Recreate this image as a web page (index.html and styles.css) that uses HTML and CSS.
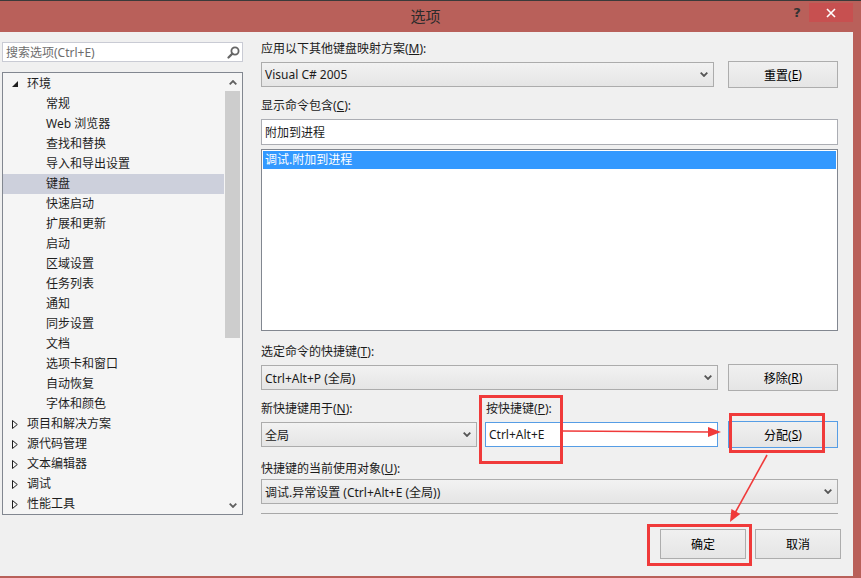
FILE: index.html
```html
<!DOCTYPE html>
<html lang="zh-CN">
<head>
<meta charset="utf-8">
<title>选项</title>
<link rel="stylesheet" href="styles.css">
</head>
<body>
<div class="window">
  <div class="titlebar">
    <span class="title">选项</span>
    <span class="help">?</span>
    <span class="close">
      <svg width="10" height="10" viewBox="0 0 10 10"><path d="M1 1 L9 9 M9 1 L1 9" stroke="#fff" stroke-width="1.6" fill="none"/></svg>
    </span>
  </div>
  <div class="client">
    <div class="left">
      <div class="search">
        <span>搜索选项(Ctrl+E)</span>
        <svg class="search-icon" width="13" height="13" viewBox="0 0 13 13"><circle cx="8" cy="5" r="3.6" stroke="#666" stroke-width="1.8" fill="none"/><path d="M5.4 7.6 L1.5 11.5" stroke="#666" stroke-width="2.2" stroke-linecap="round"/></svg>
      </div>
      <div class="tree">
        <div class="items">
          <div class="row l0"><span class="tw"><svg width="6" height="6" viewBox="0 0 6 6"><polygon points="6,0 6,6 0,6" fill="#1e1e1e"/></svg></span>环境</div>
          <div class="row l1">常规</div>
          <div class="row l1">Web 浏览器</div>
          <div class="row l1">查找和替换</div>
          <div class="row l1">导入和导出设置</div>
          <div class="row l1 sel">键盘</div>
          <div class="row l1">快速启动</div>
          <div class="row l1">扩展和更新</div>
          <div class="row l1">启动</div>
          <div class="row l1">区域设置</div>
          <div class="row l1">任务列表</div>
          <div class="row l1">通知</div>
          <div class="row l1">同步设置</div>
          <div class="row l1">文档</div>
          <div class="row l1">选项卡和窗口</div>
          <div class="row l1">自动恢复</div>
          <div class="row l1">字体和颜色</div>
          <div class="row l0"><span class="tw"><svg width="6" height="9" viewBox="0 0 6 9"><polygon points="0.5,0.5 5.3,4.5 0.5,8.5" fill="none" stroke="#1e1e1e" stroke-width="1"/></svg></span>项目和解决方案</div>
          <div class="row l0"><span class="tw"><svg width="6" height="9" viewBox="0 0 6 9"><polygon points="0.5,0.5 5.3,4.5 0.5,8.5" fill="none" stroke="#1e1e1e" stroke-width="1"/></svg></span>源代码管理</div>
          <div class="row l0"><span class="tw"><svg width="6" height="9" viewBox="0 0 6 9"><polygon points="0.5,0.5 5.3,4.5 0.5,8.5" fill="none" stroke="#1e1e1e" stroke-width="1"/></svg></span>文本编辑器</div>
          <div class="row l0"><span class="tw"><svg width="6" height="9" viewBox="0 0 6 9"><polygon points="0.5,0.5 5.3,4.5 0.5,8.5" fill="none" stroke="#1e1e1e" stroke-width="1"/></svg></span>调试</div>
          <div class="row l0"><span class="tw"><svg width="6" height="9" viewBox="0 0 6 9"><polygon points="0.5,0.5 5.3,4.5 0.5,8.5" fill="none" stroke="#1e1e1e" stroke-width="1"/></svg></span>性能工具</div>
        </div>
        <div class="scroll">
          <div class="sb-btn"><svg width="8" height="5" viewBox="0 0 8 5"><polyline points="0.7,4.3 4,1 7.3,4.3" fill="none" stroke="#606060" stroke-width="1.8"/></svg></div>
          <div class="thumb"></div>
          <div class="track"></div>
          <div class="sb-btn"><svg width="8" height="5" viewBox="0 0 8 5"><polyline points="0.7,0.7 4,4 7.3,0.7" fill="none" stroke="#606060" stroke-width="1.8"/></svg></div>
        </div>
      </div>
    </div>

    <div class="right">
      <div class="label">应用以下其他键盘映射方案(<u>M</u>):</div>
      <div class="ctl-row gap14 mt4">
        <div class="combo w453"><span>Visual C# 2005</span><svg width="8" height="5" viewBox="0 0 8 5"><polyline points="0.7,0.7 4,4 7.3,0.7" fill="none" stroke="#555" stroke-width="1.8"/></svg></div>
        <div class="btn">重置(<u>E</u>)</div>
      </div>

      <div class="label mt10">显示命令包含(<u>C</u>):</div>
      <div class="input mt5">附加到进程</div>
      <div class="list mt4">
        <div class="list-sel">调试.附加到进程</div>
      </div>

      <div class="label mt13">选定命令的快捷键(<u>T</u>):</div>
      <div class="ctl-row gap10 mt4">
        <div class="combo w457"><span>Ctrl+Alt+P (全局)</span><svg width="8" height="5" viewBox="0 0 8 5"><polyline points="0.7,0.7 4,4 7.3,0.7" fill="none" stroke="#555" stroke-width="1.8"/></svg></div>
        <div class="btn">移除(<u>R</u>)</div>
      </div>

      <div class="label-row mt10">
        <div class="label w225">新快捷键用于(<u>N</u>):</div>
        <div class="label">按快捷键(<u>P</u>):</div>
      </div>
      <div class="ctl-row mt4">
        <div class="combo w216"><span>全局</span><svg width="8" height="5" viewBox="0 0 8 5"><polyline points="0.7,0.7 4,4 7.3,0.7" fill="none" stroke="#555" stroke-width="1.8"/></svg></div>
        <div class="input focus w233">Ctrl+Alt+E</div>
        <div class="btn default">分配(<u>S</u>)</div>
      </div>

      <div class="label mt13">快捷键的当前使用对象(<u>U</u>):</div>
      <div class="combo mt2"><span>调试.异常设置 (Ctrl+Alt+E (全局))</span><svg width="8" height="5" viewBox="0 0 8 5"><polyline points="0.7,0.7 4,4 7.3,0.7" fill="none" stroke="#555" stroke-width="1.8"/></svg></div>

      <div class="sep"></div>

      <div class="actions">
        <div class="btn wide">确定</div>
        <div class="btn wide">取消</div>
      </div>
    </div>
  </div>

  <svg class="annot" width="861" height="578" viewBox="0 0 861 578">
    <rect x="480.5" y="396.5" width="81" height="66" fill="none" stroke="#f03a3a" stroke-width="3"/>
    <rect x="730.5" y="414.5" width="93" height="37" fill="none" stroke="#f03a3a" stroke-width="3"/>
    <rect x="648.5" y="525.5" width="102" height="39" fill="none" stroke="#f03a3a" stroke-width="3"/>
    <line x1="563" y1="431" x2="710" y2="432" stroke="#f03a3a" stroke-width="1.6"/>
    <polygon points="721,432 708,427 708,437" fill="#f03a3a"/>
    <line x1="767" y1="455" x2="735" y2="513" stroke="#f03a3a" stroke-width="1.6"/>
    <polygon points="730,522 740.2,513.9 731.4,509.1" fill="#f03a3a"/>
  </svg>
</div>
</body>
</html>
```

FILE: styles.css
```css
* { box-sizing: border-box; }

body { margin: 0; }

.window {
  width: 861px;
  height: 578px;
  background: #b9605a;
  position: relative;
  overflow: hidden;
  font-family: "Noto Sans", "Noto Sans CJK SC", sans-serif;
  font-size: 12px;
  color: #1b1b1b;
}

.titlebar {
  height: 32px;
  border-top: 1px solid #3a3a3a;
  display: flex;
}

.title {
  flex: 1;
  text-align: center;
  padding-left: 62px;
  font-family: "Noto Sans CJK SC", sans-serif;
  font-size: 15px;
  line-height: 30px;
  color: #2b2b2b;
}

.help {
  width: 16px;
  margin-top: 4px;
  margin-right: 4px;
  font-family: "DejaVu Sans", sans-serif;
  font-weight: bold;
  font-size: 13px;
  line-height: 16px;
  color: #333;
  text-align: center;
}

.close {
  width: 44px;
  height: 19px;
  margin-top: 2px;
  margin-right: 8px;
  background: #c75050;
  display: flex;
  align-items: center;
  justify-content: center;
}

.client {
  width: 853px;
  height: 544px;
  background: #f0f0f0;
  display: flex;
}

/* left column */
.left {
  width: 243px;
  padding-left: 2px;
  padding-top: 10px;
}

.search {
  height: 20px;
  border: 1px solid #c9cbd4;
  background: #fff;
  display: flex;
  align-items: center;
  justify-content: space-between;
  padding: 0 2px 0 3px;
  color: #6d6d6d;
  white-space: nowrap;
}

.tree {
  margin-top: 10px;
  height: 443px;
  border: 1px solid #828790;
  background: #f5f5f5;
  display: flex;
}

.items {
  flex: 1;
  padding-top: 1px;
}

.row {
  height: 20px;
  line-height: 20px;
  display: flex;
  align-items: center;
  color: #1e1e1e;
  white-space: nowrap;
}

.row.l0 { padding-left: 9px; }
.row.l1 { padding-left: 43px; }
.row.sel { background: #cdd0dc; margin-right: 1px; }

.tw {
  width: 15px;
  display: flex;
  align-items: center;
}

.scroll {
  width: 17px;
  display: flex;
  flex-direction: column;
}

.sb-btn {
  height: 18px;
  display: flex;
  align-items: center;
  justify-content: center;
  padding-right: 2px;
}

.thumb {
  height: 247px;
  background: #cdcdcd;
  margin-right: 2px;
}

.track { flex: 1; }

/* right column */
.right {
  width: 577px;
  margin-left: 18px;
  padding-top: 9px;
  display: flex;
  flex-direction: column;
}

.label {
  height: 16px;
  line-height: 16px;
  white-space: nowrap;
}

.label-row { display: flex; }

.ctl-row {
  display: flex;
  align-items: center;
  height: 27px;
}

.gap14 { gap: 14px; }
.gap10 { gap: 10px; }

.mt2 { margin-top: 2px; }
.mt4 { margin-top: 4px; }
.mt5 { margin-top: 5px; }
.mt10 { margin-top: 10px; }
.mt13 { margin-top: 13px; }

.w453 { width: 453px; }
.w457 { width: 457px; }
.w216 { width: 216px; margin-right: 8px; }
.w233 { width: 233px; margin-right: 10px; }
.w225 { width: 225px; }

.combo {
  height: 25px;
  border: 1px solid #acacac;
  background: linear-gradient(#f2f2f2, #e5e5e5);
  display: flex;
  align-items: center;
  justify-content: space-between;
  padding: 0 5px 0 3px;
  white-space: nowrap;
}

.btn {
  height: 27px;
  width: 110px;
  border: 1px solid #adadad;
  background: linear-gradient(#f0f0f0, #e5e5e5);
  display: flex;
  align-items: center;
  justify-content: center;
  white-space: nowrap;
  color: #000;
}

.btn.default { border-color: #569de5; }

.btn.wide {
  width: 86px;
  height: 30px;
}

.input {
  height: 26px;
  border: 1px solid #abadb3;
  background: #fff;
  padding-left: 3px;
  display: flex;
  align-items: center;
  white-space: nowrap;
}

.input.focus {
  height: 25px;
  border-color: #569de5;
}

.list {
  height: 182px;
  border: 1px solid #828790;
  background: #fff;
  padding: 1px;
}

.list-sel {
  height: 18px;
  line-height: 18px;
  background: #3399ff;
  color: #fff;
  padding-left: 2px;
}

.sep {
  margin-top: 9px;
  height: 1px;
  background: #a8a8a8;
}

.actions {
  display: flex;
  justify-content: flex-end;
  gap: 9px;
  margin-top: 15px;
  margin-right: -3px;
}

.annot {
  position: absolute;
  left: 0;
  top: 0;
  pointer-events: none;
}
```
